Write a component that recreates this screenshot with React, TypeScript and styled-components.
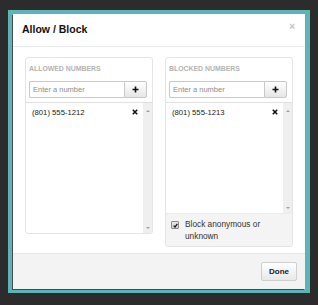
import styled, { createGlobalStyle } from "styled-components";

const GlobalStyle = createGlobalStyle`
  body {
    margin: 0;
    background: #2c2c2c;
    font-family: "Liberation Sans", Arial, sans-serif;
  }
`;

const Frame = styled.div`
  margin: 10px 0 0 8px;
  width: 302px;
  height: 283px;
  box-sizing: border-box;
  padding: 4px 5px 4px 5px;
  background: #5cb4b9;
`;

const Modal = styled.div`
  height: 100%;
  background: #fff;
  display: flex;
  flex-direction: column;
  box-shadow: -1px 1px 0 #4a4a4a;
`;

const Header = styled.div`
  height: 33px;
  box-sizing: border-box;
  border-bottom: 1px solid #ececec;
  display: flex;
  align-items: center;
  justify-content: space-between;
  padding: 0 10px 2px 9px;
`;

const Title = styled.h3`
  margin: 0;
  font-size: 10.5px;
  font-weight: bold;
  color: #111;
`;

const Close = styled.span`
  color: #c2c2c2;
  font-size: 10px;
  font-weight: bold;
  line-height: 1;
  margin-top: -5px;
`;

const Body = styled.div`
  height: 206px;
  box-sizing: border-box;
  padding: 10px 12px;
  display: grid;
  grid-template-columns: 128px 128px;
  column-gap: 12px;
  align-items: start;
`;

const Panel = styled.div<{ $height: number }>`
  height: ${(p) => p.$height}px;
  box-sizing: border-box;
  border: 1px solid #e4e4e4;
  border-radius: 3px;
  display: flex;
  flex-direction: column;
  overflow: hidden;
`;

const Label = styled.div`
  padding: 7px 3px 0;
  height: 8px;
  line-height: 8px;
  font-size: 6.9px;
  font-weight: bold;
  color: #b3b3b3;
`;

const InputRow = styled.div`
  display: flex;
  height: 17px;
  margin: 8px 5px 4px 3px;
`;

const NumberInput = styled.input`
  flex: 1;
  min-width: 0;
  box-sizing: border-box;
  height: 17px;
  border: 1px solid #c8c8c8;
  border-right: none;
  border-radius: 2px 0 0 2px;
  padding: 0 3px;
  font-family: inherit;
  font-size: 7.5px;
  color: #333;
  outline: none;
  &::placeholder {
    color: #8c8c8c;
  }
`;

const AddButton = styled.button`
  width: 23px;
  height: 17px;
  box-sizing: border-box;
  padding: 0;
  border: 1px solid #c8c8c8;
  border-radius: 0 2px 2px 0;
  background: linear-gradient(#ffffff, #e6e6e6);
  display: flex;
  align-items: center;
  justify-content: center;
`;

const List = styled.div`
  flex: 1;
  display: flex;
  border-top: 1px solid #e0e0e0;
  min-height: 0;
`;

const Items = styled.div`
  flex: 1;
  padding: 3px 0 0 6px;
`;

const Item = styled.div`
  display: flex;
  align-items: center;
  justify-content: space-between;
  height: 12px;
  padding-right: 5px;
  font-size: 7.7px;
  color: #222;
`;

const Scrollbar = styled.div`
  width: 9px;
  background: #efefef;
  display: flex;
  flex-direction: column;
  justify-content: space-between;
  align-items: center;
  padding: 7px 0 4px;
`;

const Arrow = styled.span<{ $down?: boolean }>`
  width: 0;
  height: 0;
  border-left: 2px solid transparent;
  border-right: 2px solid transparent;
  ${(p) =>
    p.$down
      ? "border-top: 2px solid #a0a0a0;"
      : "border-bottom: 2px solid #a0a0a0;"}
`;

const CheckRow = styled.label`
  height: 33px;
  box-sizing: border-box;
  background: #f4f4f4;
  border-top: 1px solid #ebebeb;
  display: flex;
  align-items: flex-start;
  gap: 6px;
  padding: 4px 6px 0 5px;
  font-size: 8.3px;
  line-height: 12px;
  color: #333;
`;

const Box = styled.span`
  flex: none;
  width: 6px;
  height: 6px;
  margin-top: 3px;
  border: 1px solid #8a8a8a;
  border-radius: 1px;
  background: linear-gradient(#e8e8e8, #cfcfcf);
  display: flex;
  align-items: center;
  justify-content: center;
`;

const Footer = styled.div`
  flex: 1;
  border-top: 1px solid #e6e6e6;
  background: #f3f3f3;
  display: flex;
  justify-content: flex-end;
  align-items: center;
  padding-right: 8px;
`;

const DoneButton = styled.button`
  width: 36px;
  height: 19px;
  padding: 0;
  border: 1px solid #cfcfcf;
  border-radius: 2px;
  background: linear-gradient(#ffffff, #e8e8e8);
  font-family: inherit;
  font-size: 8px;
  font-weight: bold;
  color: #222;
`;

const Plus = () => (
  <svg width="7" height="7" viewBox="0 0 7 7">
    <path d="M3.5 0.5v6M0.5 3.5h6" stroke="#111" strokeWidth="1.6" />
  </svg>
);

const Remove = () => (
  <svg width="6" height="6" viewBox="0 0 6 6">
    <path d="M0.8 0.8l4.4 4.4M5.2 0.8l-4.4 4.4" stroke="#111" strokeWidth="1.6" />
  </svg>
);

const Check = () => (
  <svg width="5" height="5" viewBox="0 0 6 6">
    <path d="M0.8 3.2l1.6 1.6 2.8-3.8" stroke="#111" strokeWidth="1.5" fill="none" />
  </svg>
);

type Props = { title: string; number: string; height: number; anonymous?: boolean };

const NumberPanel = ({ title, number, height, anonymous }: Props) => (
  <Panel $height={height}>
    <Label>{title}</Label>
    <InputRow>
      <NumberInput placeholder="Enter a number" />
      <AddButton>
        <Plus />
      </AddButton>
    </InputRow>
    <List>
      <Items>
        <Item>
          {number}
          <Remove />
        </Item>
      </Items>
      <Scrollbar>
        <Arrow />
        <Arrow $down />
      </Scrollbar>
    </List>
    {anonymous && (
      <CheckRow>
        <Box>
          <Check />
        </Box>
        <span>Block anonymous or unknown</span>
      </CheckRow>
    )}
  </Panel>
);

export default function App() {
  return (
    <>
      <GlobalStyle />
      <Frame>
        <Modal>
          <Header>
            <Title>Allow / Block</Title>
            <Close>×</Close>
          </Header>
          <Body>
            <NumberPanel title="ALLOWED NUMBERS" number="(801) 555-1212" height={177} />
            <NumberPanel title="BLOCKED NUMBERS" number="(801) 555-1213" height={190} anonymous />
          </Body>
          <Footer>
            <DoneButton>Done</DoneButton>
          </Footer>
        </Modal>
      </Frame>
    </>
  );
}
